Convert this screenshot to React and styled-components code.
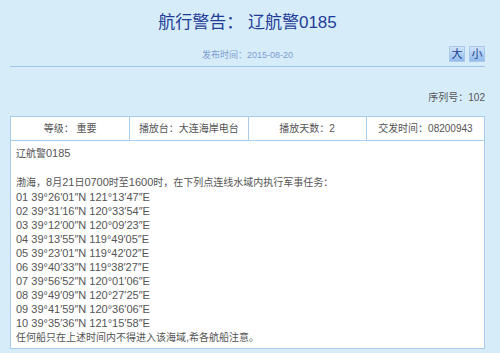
import React from 'react'
import styled, { createGlobalStyle } from 'styled-components'

const GlobalStyle = createGlobalStyle`
  html, body {
    margin: 0;
    padding: 0;
    background: #d6ecf9;
  }
  body {
    font-family: "Liberation Sans", "Noto Sans CJK SC", sans-serif;
    color: #555;
  }
`

const Page = styled.div`
  width: 475px;
  padding: 11px 15px 0 10px;
`

const Title = styled.h1`
  margin: 0;
  height: 24px;
  line-height: 24px;
  text-align: center;
  font-size: 17px;
  font-weight: normal;
  color: #1f3d98;
`

const InfoRow = styled.div`
  display: grid;
  grid-template-columns: 1fr auto 1fr;
  align-items: center;
  margin-top: 11px;
  padding-bottom: 4px;
  border-bottom: 1px solid #9fc5ef;
`

const PublishDate = styled.span`
  grid-column: 2;
  font-size: 9px;
  color: #7b9dcf;
`

const SizeButtons = styled.div`
  grid-column: 3;
  display: flex;
  justify-content: flex-end;
  gap: 4px;
`

const SizeButton = styled.button`
  width: 16px;
  height: 16px;
  padding: 0;
  border: 1px solid #a9c8ec;
  background: linear-gradient(#d0e3f8, #92bbeb);
  color: #203e92;
  font-family: inherit;
  font-size: 11px;
  line-height: 14px;
  cursor: pointer;
`

const Serial = styled.div`
  margin-top: 24px;
  text-align: right;
  font-size: 10px;
  line-height: 14px;
  color: #555;
`

const Board = styled.div`
  margin-top: 11px;
  background: #fff;
  border: 1px solid #a6cdee;
`

const MetaRow = styled.div`
  display: grid;
  grid-template-columns: repeat(4, 1fr);
  border-bottom: 1px solid #a6cdee;
`

const MetaCell = styled.div`
  height: 23px;
  line-height: 23px;
  text-align: center;
  font-size: 10px;
  color: #555;
  & + & {
    border-left: 1px solid #a6cdee;
  }
`

const Body = styled.div`
  padding: 5px 5px 3px 5px;
  font-size: 11px;
  line-height: 14px;
  color: #555;
`

const Line = styled.div`
  min-height: 14px;
`

// Chinese runs in the notice body are set a touch smaller than the Latin digits
const Han = styled.span`
  font-size: 10px;
`

const hanRun = /([\u3000-\u303f\u4e00-\u9fff\uff00-\uffef]+)/

function Mixed({ text }) {
  return text.split(hanRun).map((part, i) => (i % 2 ? <Han key={i}>{part}</Han> : part))
}

const meta = ['等级： 重要', '播放台：大连海岸电台', '播放天数：2', '交发时间：08200943']

const points = [
  '01 39°26′01″N 121°13′47″E',
  '02 39°31′16″N 120°33′54″E',
  '03 39°12′00″N 120°09′23″E',
  '04 39°13′55″N 119°49′05″E',
  '05 39°23′01″N 119°42′02″E',
  '06 39°40′33″N 119°38′27″E',
  '07 39°56′52″N 120°01′06″E',
  '08 39°49′09″N 120°27′25″E',
  '09 39°41′59″N 120°36′06″E',
  '10 39°35′36″N 121°15′58″E',
]

export default function App() {
  return (
    <>
      <GlobalStyle />
      <Page>
        <Title>航行警告： 辽航警0185</Title>
        <InfoRow>
          <PublishDate>发布时间：2015-08-20</PublishDate>
          <SizeButtons>
            <SizeButton>大</SizeButton>
            <SizeButton>小</SizeButton>
          </SizeButtons>
        </InfoRow>
        <Serial>序列号：102</Serial>
        <Board>
          <MetaRow>
            {meta.map(m => (
              <MetaCell key={m}>{m}</MetaCell>
            ))}
          </MetaRow>
          <Body>
            <Line><Mixed text="辽航警0185" /></Line>
            <Line />
            <Line><Mixed text="渤海，8月21日0700时至1600时，在下列点连线水域内执行军事任务：" /></Line>
            {points.map(p => (
              <Line key={p}>{p}</Line>
            ))}
            <Line><Mixed text="任何船只在上述时间内不得进入该海域,希各航船注意。" /></Line>
          </Body>
        </Board>
      </Page>
    </>
  )
}
